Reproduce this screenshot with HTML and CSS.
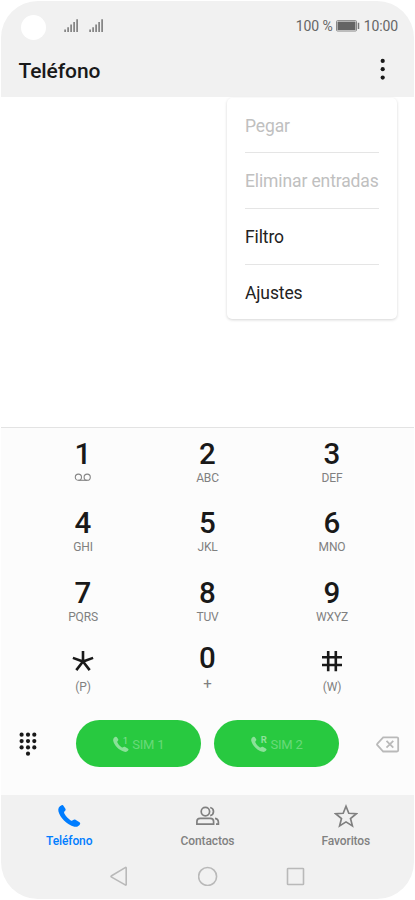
FILE: index.html
```html
<!DOCTYPE html>
<html lang="es">
<head>
<meta charset="utf-8">
<title>Teléfono</title>
<link rel="stylesheet" href="styles.css">
</head>
<body>
<div class="phone">
  <header class="header">
    <div class="status">
      <span class="camera"></span>
      <svg class="signal" width="15" height="14" viewBox="0 0 15 14"><path d="M1.1 10.5V13M4.1 8.3V13M7.1 5.6V13M10.1 3V13M13.1 .3V13"/></svg>
      <svg class="signal second" width="15" height="14" viewBox="0 0 15 14"><path d="M1.1 10.5V13M4.1 8.3V13M7.1 5.6V13M10.1 3V13M13.1 .3V13"/></svg>
      <span class="percent">100 %</span>
      <svg class="battery" width="24" height="12" viewBox="0 0 24 12"><rect class="case" x=".5" y=".6" width="20" height="10.4" rx="1"/><rect class="charge" x="1.5" y="1.6" width="18" height="8.4"/><path class="tip" d="M22.5 2.8V9"/></svg>
      <span class="clock">10:00</span>
    </div>
    <div class="titlebar">
      <h1>Teléfono</h1>
      <svg class="more" width="6" height="24" viewBox="0 0 6 24"><circle cx="2.7" cy="3.9" r="2.1"/><circle cx="2.7" cy="12.2" r="2.1"/><circle cx="2.7" cy="20.6" r="2.1"/></svg>
      <nav class="menu">
        <div class="item off">Pegar</div>
        <div class="item off">Eliminar entradas</div>
        <div class="item">Filtro</div>
        <div class="item">Ajustes</div>
      </nav>
    </div>
  </header>
  <main class="log"></main>
  <section class="dialer">
    <div class="keys">
      <div class="key"><b>1</b><svg class="voicemail" width="18" height="14" viewBox="0 0 18 14"><circle cx="4.4" cy="7.2" r="3.1"/><circle cx="13.2" cy="7.2" r="3.1"/><path d="M4.4 10.3h9"/></svg></div>
      <div class="key"><b>2</b><span>ABC</span></div>
      <div class="key"><b>3</b><span>DEF</span></div>
      <div class="key"><b>4</b><span>GHI</span></div>
      <div class="key"><b>5</b><span>JKL</span></div>
      <div class="key"><b>6</b><span>MNO</span></div>
      <div class="key"><b>7</b><span>PQRS</span></div>
      <div class="key"><b>8</b><span>TUV</span></div>
      <div class="key"><b>9</b><span>WXYZ</span></div>
      <div class="key"><svg class="symbol" width="22" height="30" viewBox="0 0 22 30"><path d="M11 4.9V15.5M.9 11.9L11 15.5L21.1 11.9M11 15.5L4.3 24.1M11 15.5L17.7 24.1"/></svg><span>(P)</span></div>
      <div class="key zero"><b>0</b><span>+</span></div>
      <div class="key"><svg class="symbol" width="22" height="30" viewBox="0 0 22 30"><path d="M7.2 4.9V25.3M14.8 4.9V25.3M1 11.2H21M1 19H21"/></svg><span>(W)</span></div>
    </div>
    <div class="actions">
      <svg class="pad" width="18" height="24" viewBox="0 0 18 24"><g><circle cx="2.6" cy="2.7" r="2.1"/><circle cx="9" cy="2.7" r="2.1"/><circle cx="15.3" cy="2.7" r="2.1"/><circle cx="2.6" cy="9.1" r="2.1"/><circle cx="9" cy="9.1" r="2.1"/><circle cx="15.3" cy="9.1" r="2.1"/><circle cx="2.6" cy="15.4" r="2.1"/><circle cx="9" cy="15.4" r="2.1"/><circle cx="15.3" cy="15.4" r="2.1"/><circle cx="9" cy="21.7" r="2.1"/></g></svg>
      <div class="call"><svg width="16" height="18" viewBox="0 0 16 18"><use href="#handset" transform="translate(0 1.6) scale(.7)"/><text x="9.8" y="8.6">1</text></svg><span>SIM 1</span></div>
      <div class="call"><svg width="16" height="18" viewBox="0 0 16 18"><use href="#handset" transform="translate(0 1.6) scale(.7)"/><text class="bold" x="9.8" y="8.4">R</text></svg><span>SIM 2</span></div>
      <svg class="erase" width="24" height="18" viewBox="0 0 24 18"><path d="M7.2 2.3H21Q22.2 2.3 22.2 3.5V15.3Q22.2 16.5 21 16.5H7.2L1.4 10.2Q.6 9.4 1.4 8.6ZM10.5 5.9L17.3 12.7M17.3 5.9L10.5 12.7"/></svg>
    </div>
  </section>
  <footer class="footer">
    <div class="tabs">
      <div class="tab active"><svg width="24" height="24" viewBox="0 0 24 24"><g transform="translate(1 1)"><path id="handset" d="M3.6 .3C4.4-.1 5.1.2 5.6.9L7.4 3.8C8 4.8 7.4 5.7 6.7 6.3C5.8 7 6 7.8 6.5 8.8C8 11.6 10.3 13.9 12.8 15.4C13.7 15.9 14.4 15.6 15.1 15C15.8 14.4 16.7 14.3 17.5 14.7L21.1 17C22.1 17.6 22.5 18.3 22 19.3C21.1 21.2 18.9 22.3 16.4 21.7C8.6 19.7 1.8 12.4 .4 6.3C-.2 3.4 1.1 1.3 3.6 .3Z"/></g></svg><span>Teléfono</span></div>
      <div class="tab"><svg width="24" height="24" viewBox="0 0 24 24"><g class="line"><circle cx="9.4" cy="7.6" r="4.2"/><path d="M4.2 14.3H14.2Q17.6 14.3 17.6 17.5V20.2H.9V17.5Q.9 14.3 4.2 14.3ZM14.2 3.5A4.2 4.2 0 0 1 14.2 11.7M19 14.4Q22.4 15 22.4 18.4V20.2H20"/></g></svg><span>Contactos</span></div>
      <div class="tab"><svg width="24" height="24" viewBox="0 0 24 24"><path class="line" d="M12 2.3L14.8 9.3L22.3 9.7L16.5 14.5L18.4 21.9L12 17.9L5.6 21.9L7.5 14.5L1.7 9.7L9.2 9.3Z"/></svg><span>Favoritos</span></div>
    </div>
    <div class="system">
      <svg width="20" height="20" viewBox="0 0 20 20"><path d="M16.2 2.1V18.4Q16.2 19.5 15.2 18.9L1.6 11.1Q.4 10.4 1.6 9.7L15.2 1.6Q16.2 1 16.2 2.1Z"/></svg>
      <svg width="20" height="20" viewBox="0 0 20 20"><circle cx="9.6" cy="10.5" r="9"/></svg>
      <svg width="20" height="20" viewBox="0 0 20 20"><rect x="1.5" y="2.5" width="16" height="16" rx=".6"/></svg>
    </div>
  </footer>
</div>
</body>
</html>
```

FILE: styles.css
```css
* { box-sizing: border-box; }
body { margin: 0; background: #fff; font-family: Roboto, "Liberation Sans", sans-serif; color: #191919; }
svg { display: block; flex: none; }
.phone { width: 413px; height: 898px; margin: 1px; border-radius: 37px; background: #fff; display: flex; flex-direction: column; overflow: hidden; }
.header { height: 96px; background: #f1f1f1; }
.status { height: 50px; display: flex; align-items: center; padding: 0 16px 0 19.5px; font-size: 14px; letter-spacing: -.1px; color: #666; }
.camera { width: 25px; height: 25px; border-radius: 50%; background: #fff; margin: 2px 18px 0 0; }
.signal { fill: none; stroke: #737373; stroke-width: 1.5; }
.second { margin-left: 10px; }
.percent { margin-left: auto; }
.battery { margin: 0 4px 0 3px; }
.case { fill: none; stroke: #888; }
.charge { fill: #646464; }
.tip { stroke: #777; stroke-width: 1.5; }
.titlebar { position: relative; height: 46px; display: flex; align-items: flex-start; justify-content: space-between; padding: 0 28px 0 17.5px; }
h1 { margin: 6.5px 0 0; font-size: 21px; letter-spacing: -.1px; line-height: 26px; font-weight: 500; }
.more { margin-top: 6px; fill: #191919; }
.menu { position: absolute; z-index: 1; top: 46.5px; right: 17px; width: 170px; height: 221.5px; padding: 0 18px; border-radius: 5px; background: #fff; box-shadow: 0 1px 3px rgba(0,0,0,.17); }
.item { height: 55.7px; line-height: 56px; font-size: 17.5px; letter-spacing: -.12px; white-space: nowrap; border-bottom: 1px solid #e5e5e5; color: #222; }
.item:last-child { border: 0; line-height: 57px; }
.off { color: #c0c0c0; }
.log { height: 330px; }
.dialer { height: 368px; background: #fcfcfc; border-top: 1px solid #e3e3e3; }
.keys { display: grid; grid-template-columns: repeat(3, 124.5px); grid-auto-rows: 69.4px; justify-content: center; padding-top: 10px; height: 292.5px; }
.key { display: flex; flex-direction: column; align-items: center; }
.key b { font-size: 29.5px; line-height: 33px; font-weight: 500; }
.key span { font-size: 12px; letter-spacing: -.15px; line-height: 14px; color: #808080; }
.zero b { margin-top: -4px; }
.zero span { font-size: 15px; line-height: 18px; }
.symbol { height: 30px; margin: 0 0 3.5px; fill: none; stroke: #191919; stroke-width: 2.6; }
.voicemail { margin-top: -1px; fill: none; stroke: #858585; stroke-width: 1.1; }
.actions { height: 46px; display: flex; align-items: center; padding: 0 14px 0 17.5px; }
.pad { fill: #191919; margin-right: 39.5px; }
.call { width: 124.7px; height: 46.5px; border-radius: 24px; background: #28c940; display: flex; align-items: center; justify-content: center; gap: 3px; color: #68d979; font-size: 13px; letter-spacing: -.2px; }
.call span { margin-top: 1px; }
.call + .call { margin-left: 13.5px; }
.call svg { margin-left: 1px; fill: #8be199; font-size: 9.5px; }
.bold { font-weight: 700; }
.erase { margin-left: auto; fill: none; stroke: #b9b9b9; stroke-width: 1.8; }
.footer { height: 104px; background: #f1f1f1; }
.tabs { display: grid; grid-template-columns: repeat(3, 138.3px); justify-content: center; padding-top: 9px; height: 70px; }
.tab { display: flex; flex-direction: column; align-items: center; font-size: 12px; letter-spacing: -.12px; font-weight: 500; line-height: 14px; color: #818181; }
.tab span { margin-top: 6px; }
.line { fill: none; stroke: #808080; stroke-width: 1.7; }
.active { color: #007dff; fill: #007dff; }
.system { display: flex; justify-content: center; gap: 68px; fill: none; stroke: #b9b9b9; stroke-width: 1.6; padding-top: 1px; }
```
